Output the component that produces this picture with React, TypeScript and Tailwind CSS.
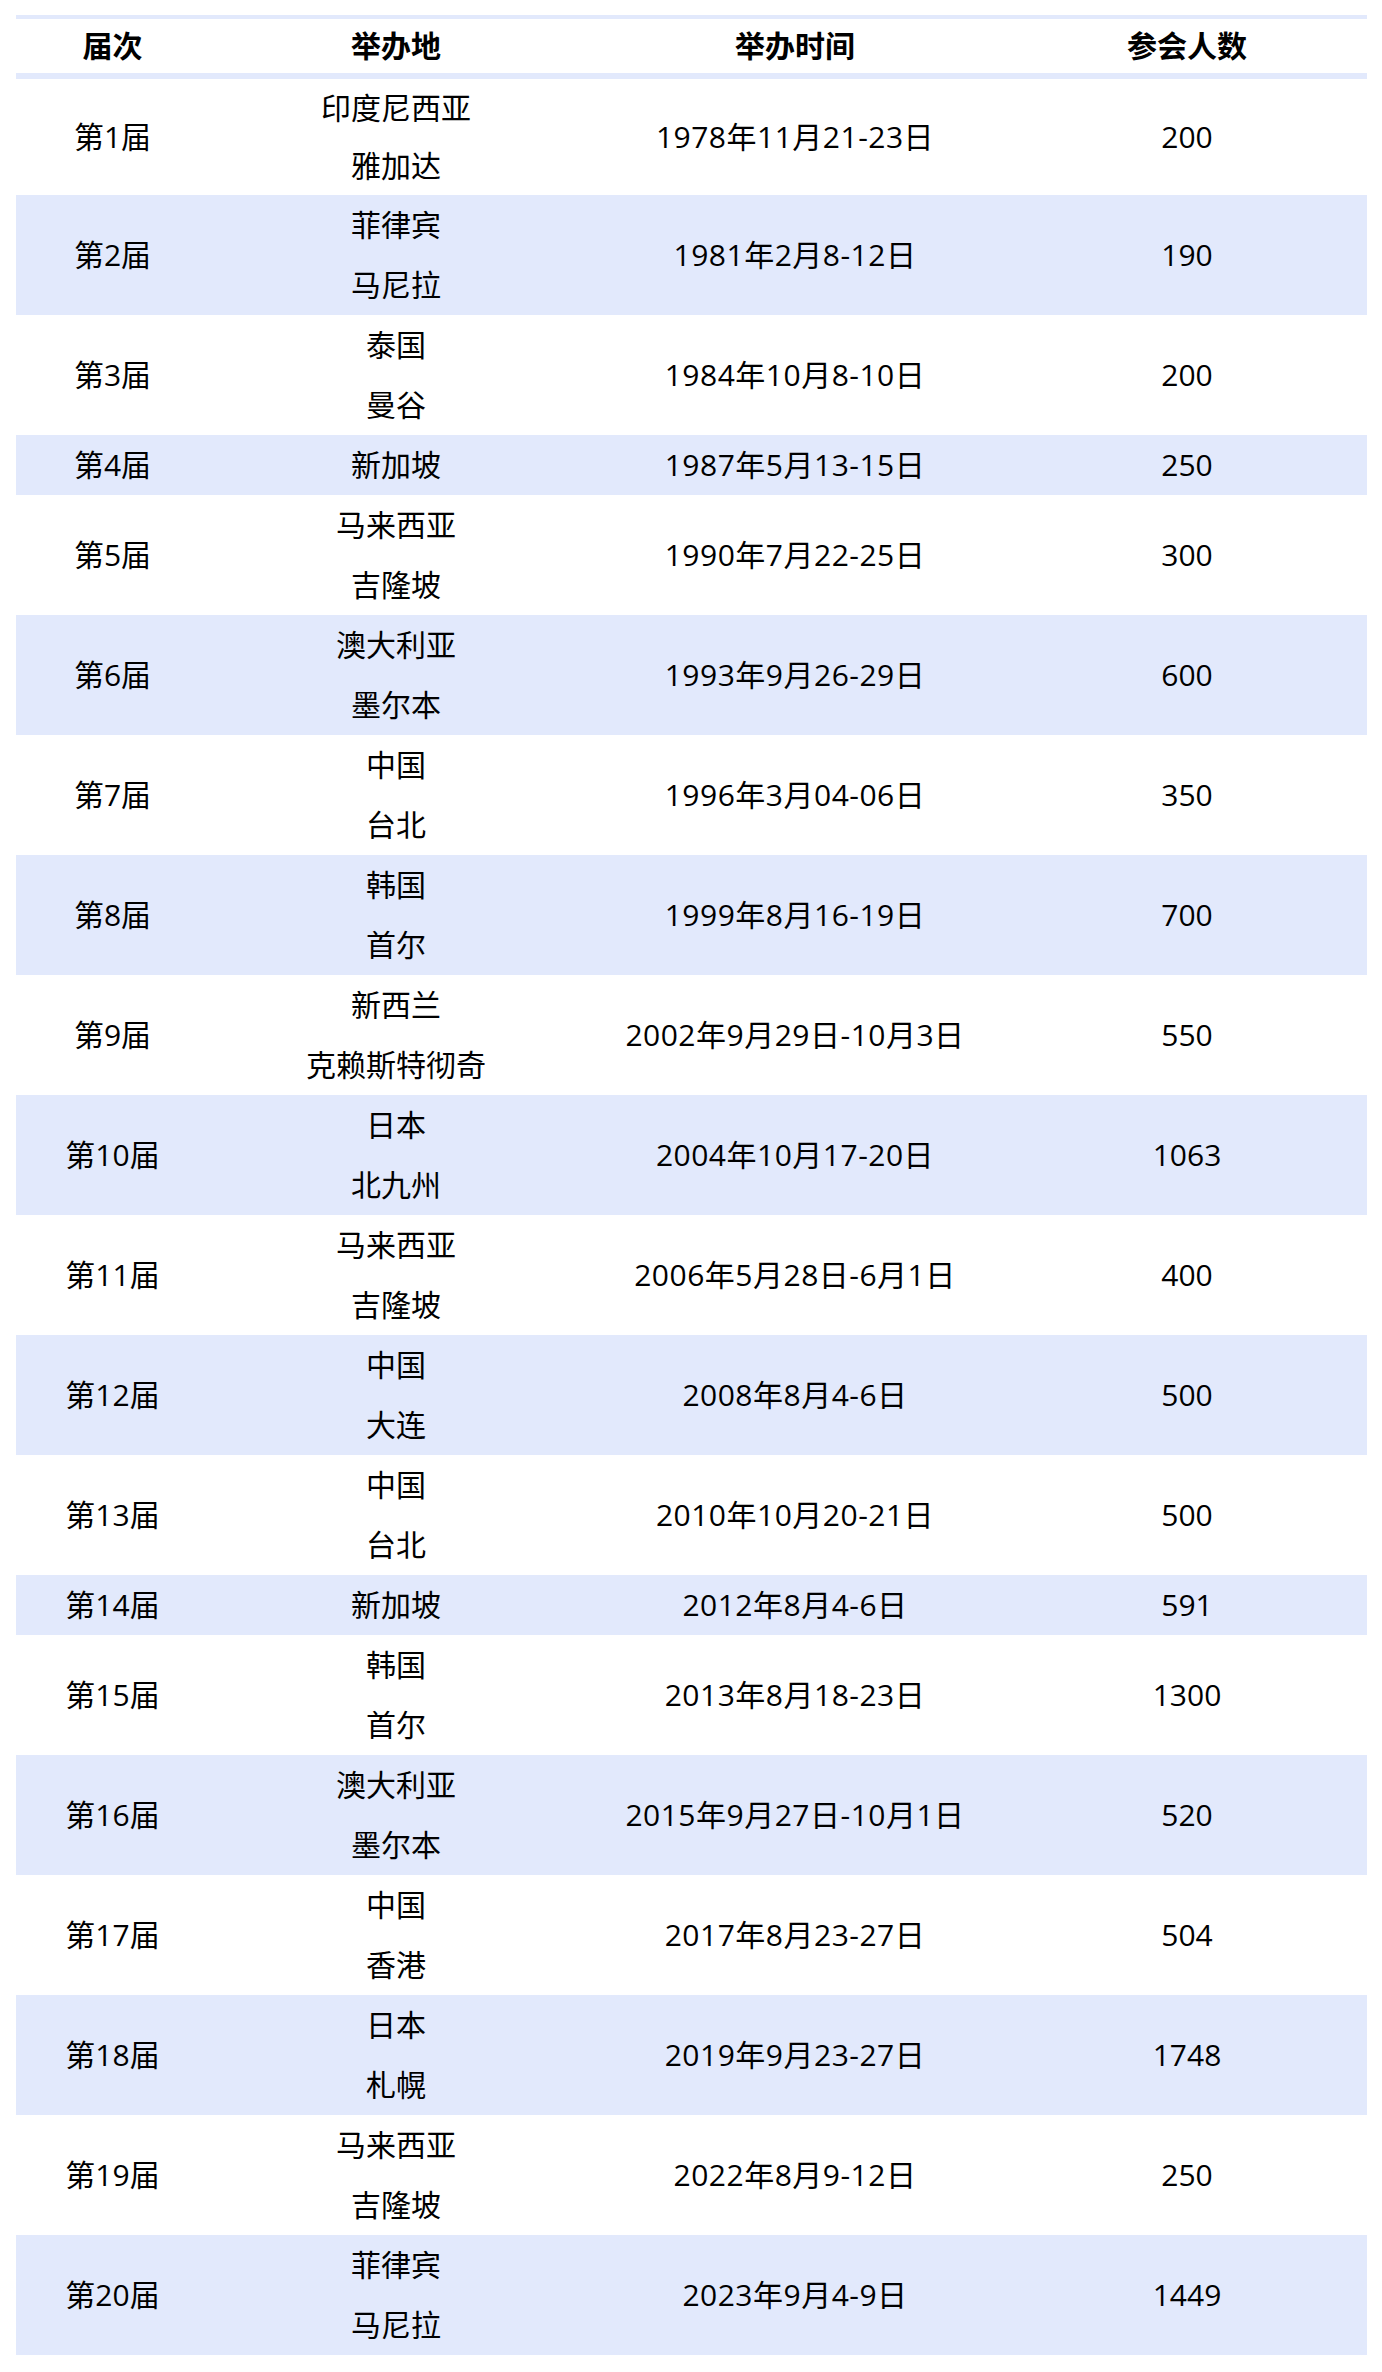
const rows: [string, string[], string, string][] = [
  ['第1届', ['印度尼西亚', '雅加达'], '1978年11月21-23日', '200'],
  ['第2届', ['菲律宾', '马尼拉'], '1981年2月8-12日', '190'],
  ['第3届', ['泰国', '曼谷'], '1984年10月8-10日', '200'],
  ['第4届', ['新加坡'], '1987年5月13-15日', '250'],
  ['第5届', ['马来西亚', '吉隆坡'], '1990年7月22-25日', '300'],
  ['第6届', ['澳大利亚', '墨尔本'], '1993年9月26-29日', '600'],
  ['第7届', ['中国', '台北'], '1996年3月04-06日', '350'],
  ['第8届', ['韩国', '首尔'], '1999年8月16-19日', '700'],
  ['第9届', ['新西兰', '克赖斯特彻奇'], '2002年9月29日-10月3日', '550'],
  ['第10届', ['日本', '北九州'], '2004年10月17-20日', '1063'],
  ['第11届', ['马来西亚', '吉隆坡'], '2006年5月28日-6月1日', '400'],
  ['第12届', ['中国', '大连'], '2008年8月4-6日', '500'],
  ['第13届', ['中国', '台北'], '2010年10月20-21日', '500'],
  ['第14届', ['新加坡'], '2012年8月4-6日', '591'],
  ['第15届', ['韩国', '首尔'], '2013年8月18-23日', '1300'],
  ['第16届', ['澳大利亚', '墨尔本'], '2015年9月27日-10月1日', '520'],
  ['第17届', ['中国', '香港'], '2017年8月23-27日', '504'],
  ['第18届', ['日本', '札幌'], '2019年9月23-27日', '1748'],
  ['第19届', ['马来西亚', '吉隆坡'], '2022年8月9-12日', '250'],
  ['第20届', ['菲律宾', '马尼拉'], '2023年9月4-9日', '1449'],
];

export default function App() {
  return (
    <div
      className="bg-white pl-[16px] pt-[15px] text-[30px] leading-[60px] text-black"
      style={{ fontFamily: '"Open Sans", "Noto Sans CJK SC", sans-serif' }}
    >
      <table className="w-[1351px] table-fixed border-collapse text-center">
        <colgroup>
          <col className="w-[193px]" />
          <col className="w-[374px]" />
          <col className="w-[424px]" />
          <col className="w-[360px]" />
        </colgroup>
        <thead>
          <tr className="border-t-[4px] border-b-[6px] border-[#e2e9fc]">
            <th className="p-0 h-[54px] font-bold leading-[54px]">届次</th>
            <th className="p-0 h-[54px] font-bold leading-[54px]">举办地</th>
            <th className="p-0 h-[54px] font-bold leading-[54px]">举办时间</th>
            <th className="p-0 h-[54px] font-bold leading-[54px]">参会人数</th>
          </tr>
        </thead>
        <tbody>
          {rows.map((r, i) => (
            <tr
              key={r[0]}
              className={(i % 2 === 1 ? 'bg-[#e2e9fc]' : 'bg-white') + (i === 0 ? ' leading-[58px]' : '')}
            >
              <td className="p-0">{r[0]}</td>
              <td className="p-0">
                {r[1].map((p) => (
                  <div key={p}>{p}</div>
                ))}
              </td>
              <td className="p-0 tracking-[0.5px]">{r[2]}</td>
              <td className="p-0">{r[3]}</td>
            </tr>
          ))}
        </tbody>
      </table>
    </div>
  );
}
